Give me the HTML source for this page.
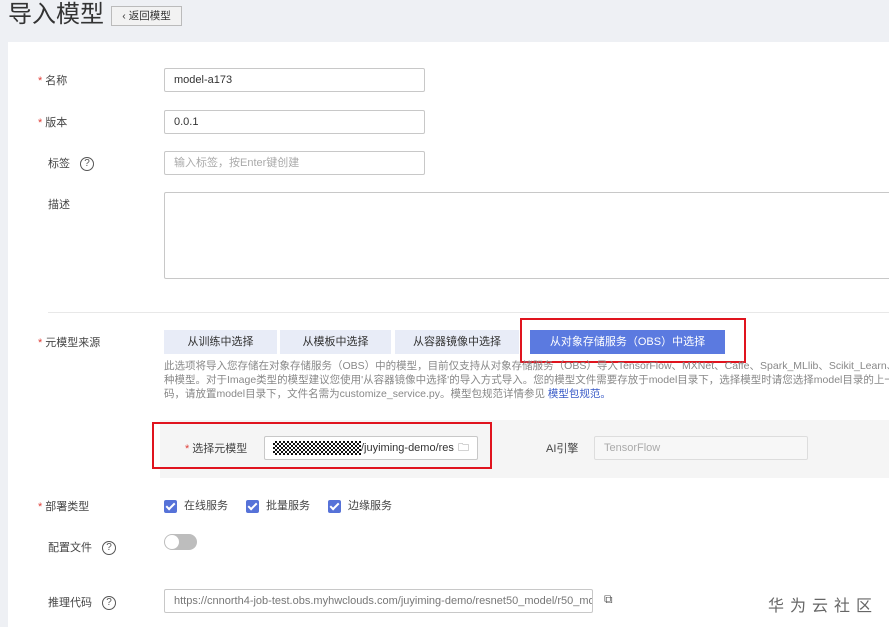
<!DOCTYPE html>
<html><head><meta charset="utf-8"><style>
*{margin:0;padding:0;box-sizing:border-box}
body{width:889px;height:627px;overflow:hidden;background:#eef0f4;font-family:"Liberation Sans","Noto Sans CJK SC",sans-serif;font-size:11px;color:#333;position:relative}
.a{position:absolute;white-space:nowrap}
.panel{position:absolute;left:8px;top:42px;width:881px;height:585px;background:#fff}
.lbl{position:absolute;font-size:11px;color:#444;line-height:14px}
.st{color:#e0403a;margin-right:3px}
.in{position:absolute;height:24px;border:1px solid #c8c8c8;border-radius:2px;background:#fff;padding-left:9px;line-height:22px;font-size:11px;color:#333;overflow:hidden;white-space:nowrap}
.ph{color:#aaa}
.q{display:inline-block;width:14px;height:14px;border:1.3px solid #555;border-radius:50%;font-size:10px;line-height:11px;text-align:center;margin-left:10px;vertical-align:middle;color:#555}
.tab{position:absolute;top:330px;height:24px;background:#e8ecf7;text-align:center;line-height:24px;font-size:11px;color:#333}
.red{position:absolute;border:2.5px solid #e0141e}
.cb{display:inline-block;width:13px;height:13px;background:#5672d8;border-radius:2px;vertical-align:middle;margin-right:7px;position:relative}
.cb:after{content:"";position:absolute;left:4px;top:1px;width:3px;height:7px;border:solid #fff;border-width:0 2px 2px 0;transform:rotate(45deg)}
.desc{position:absolute;left:164px;font-size:10.5px;color:#888;line-height:14.5px;white-space:nowrap}
</style></head><body>
<div class="a" style="left:8px;top:0;font-size:24px;color:#333;line-height:30px">导入模型</div>
<div class="a" style="left:111px;top:6px;width:71px;height:20px;border:1px solid #bbb;background:#f2f2f2;font-size:10.5px;line-height:18px;text-align:center;color:#333">‹ 返回模型</div>
<div class="panel"></div>

<div class="lbl" style="left:38px;top:74px"><span class="st">*</span>名称</div>
<div class="in" style="left:164px;top:68px;width:261px">model-a173</div>
<div class="lbl" style="left:38px;top:116px"><span class="st">*</span>版本</div>
<div class="in" style="left:164px;top:110px;width:261px">0.0.1</div>
<div class="lbl" style="left:48px;top:157px">标签<span class="q">?</span></div>
<div class="in ph" style="left:164px;top:151px;width:261px">输入标签，按Enter键创建</div>
<div class="lbl" style="left:48px;top:198px">描述</div>
<div class="in" style="left:164px;top:192px;width:740px;height:87px"></div>
<div class="a" style="left:48px;top:312px;width:841px;height:1px;background:#e8e8e8"></div>

<div class="lbl" style="left:38px;top:336px"><span class="st">*</span>元模型来源</div>
<div class="tab" style="left:164px;width:113px">从训练中选择</div>
<div class="tab" style="left:280px;width:111px">从模板中选择</div>
<div class="tab" style="left:395px;width:124px">从容器镜像中选择</div>
<div class="tab" style="left:530px;width:195px;background:#5b7ae0;color:#fff">从对象存储服务（OBS）中选择</div>
<div class="red" style="left:520px;top:318px;width:226px;height:45px"></div>
<div class="desc" style="top:359px">此选项将导入您存储在对象存储服务（OBS）中的模型，目前仅支持从对象存储服务（OBS）导入TensorFlow、MXNet、Caffe、Spark_MLlib、Scikit_Learn、XG</div>
<div class="desc" style="top:373px">种模型。对于Image类型的模型建议您使用'从容器镜像中选择'的导入方式导入。您的模型文件需要存放于model目录下，选择模型时请您选择model目录的上一级</div>
<div class="desc" style="top:387px">码，请放置model目录下，文件名需为customize_service.py。模型包规范详情参见 <span style="color:#3a5bc7">模型包规范。</span></div>

<div class="a" style="left:160px;top:420px;width:729px;height:58px;background:#f5f5f5"></div>
<div class="lbl" style="left:185px;top:442px"><span class="st">*</span>选择元模型</div>
<div class="in" style="left:264px;top:436px;width:214px;padding-left:8px"><span style="display:inline-block;width:88px;height:14px;vertical-align:middle;background:repeating-conic-gradient(#111 0 25%,#fff 0 50%) 0 0/4px 4px"></span>/juyiming-demo/res<span style="position:absolute;right:8px;top:0;color:#555">🗀</span></div>
<div class="lbl" style="left:546px;top:442px">AI引擎</div>
<div class="in ph" style="left:594px;top:436px;width:214px;background:#f7f7f7;border-color:#ddd">TensorFlow</div>
<div class="red" style="left:152px;top:422px;width:340px;height:47px"></div>

<div class="lbl" style="left:38px;top:500px"><span class="st">*</span>部署类型</div>
<div class="lbl" style="left:164px;top:499px"><span class="cb"></span>在线服务</div>
<div class="lbl" style="left:246px;top:499px"><span class="cb"></span>批量服务</div>
<div class="lbl" style="left:328px;top:499px"><span class="cb"></span>边缘服务</div>
<div class="lbl" style="left:48px;top:541px">配置文件<span class="q">?</span></div>
<div class="a" style="left:164px;top:534px;width:33px;height:16px;border-radius:8px;background:#bdbdbd"><div style="position:absolute;left:1px;top:1px;width:14px;height:14px;border-radius:50%;background:#fff"></div></div>
<div class="lbl" style="left:48px;top:596px">推理代码<span class="q">?</span></div>
<div class="in" style="left:164px;top:589px;width:429px;color:#777">https://cnnorth4-job-test.obs.myhwclouds.com/juyiming-demo/resnet50_model/r50_mo</div>
<div class="a" style="left:604px;top:592px;font-size:12px;color:#555">⧉</div>
<div class="a" style="left:768px;top:592px;font-size:16px;letter-spacing:6px;color:#666">华为云社区</div>
</body></html>
